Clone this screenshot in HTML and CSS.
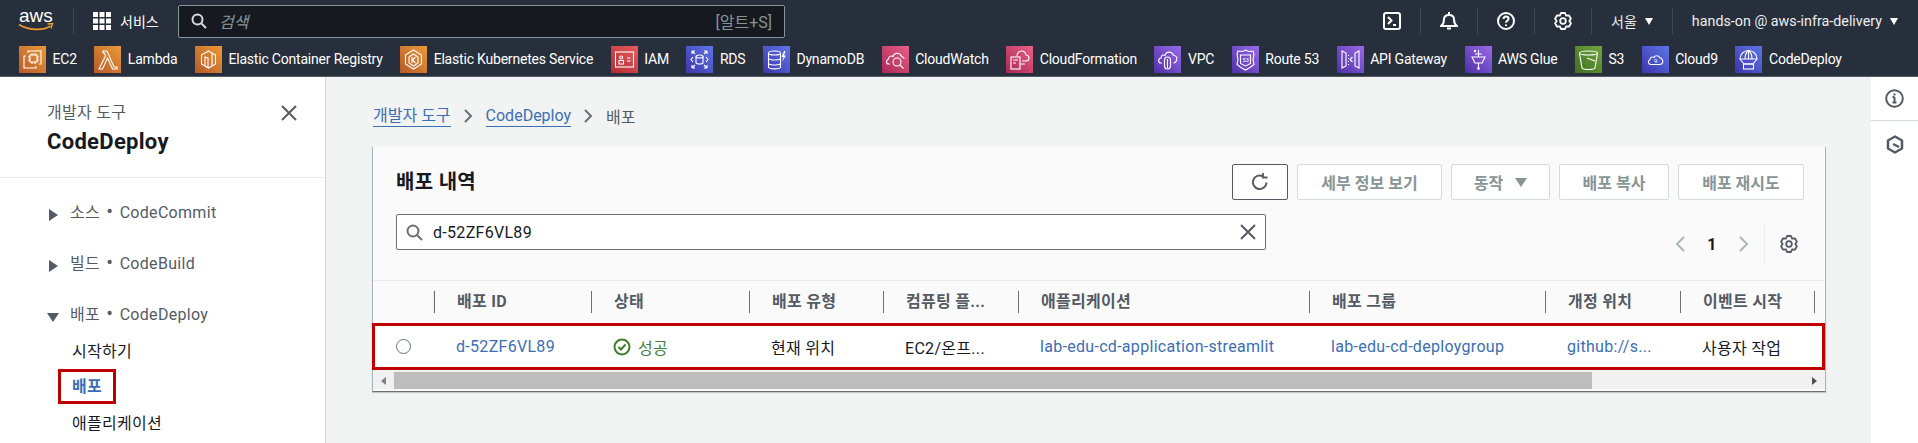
FILE: index.html
```html
<!DOCTYPE html>
<html lang="ko">
<head>
    <meta charset="UTF-8">
    <meta name="viewport" content="width=device-width, initial-scale=1.0">
    <title>배포 내역 - CodeDeploy</title>
    <link rel="stylesheet" href="styles.css">
</head>
<body>
    <svg class="defs" width="0" height="0">
        <defs>
            <linearGradient id="g-orange" x1="0" y1="1" x2="1" y2="0"><stop offset="0" stop-color="#b8592a"/><stop offset="1" stop-color="#eb9a37"/></linearGradient>
            <linearGradient id="g-red" x1="0" y1="1" x2="1" y2="0"><stop offset="0" stop-color="#b32a33"/><stop offset="1" stop-color="#e85c5f"/></linearGradient>
            <linearGradient id="g-blue" x1="0" y1="1" x2="1" y2="0"><stop offset="0" stop-color="#3d35ad"/><stop offset="1" stop-color="#5e75e6"/></linearGradient>
            <linearGradient id="g-pink" x1="0" y1="1" x2="1" y2="0"><stop offset="0" stop-color="#a82957"/><stop offset="1" stop-color="#ea5f85"/></linearGradient>
            <linearGradient id="g-purple" x1="0" y1="1" x2="1" y2="0"><stop offset="0" stop-color="#4f2fa8"/><stop offset="1" stop-color="#9a6ae8"/></linearGradient>
            <linearGradient id="g-green" x1="0" y1="1" x2="1" y2="0"><stop offset="0" stop-color="#3f6e22"/><stop offset="1" stop-color="#70a63c"/></linearGradient>
        </defs>
    </svg>

    <header class="top-nav">
        <div class="nav-row">
            <svg class="aws-logo" width="35" height="22" viewBox="0 0 35 22">
                <text x="0" y="12" class="aws-word">aws</text>
                <path d="M0 14.500c9 6 24 6.500 31.500 1.500" fill="none" stroke="#ec9a2d" stroke-width="1.600"/>
                <path d="M28.500 14l5-.5-1.500 5" fill="none" stroke="#ec9a2d" stroke-width="1.400"/>
            </svg>
            <span class="nav-sep sep-logo"></span>
            <svg class="grid-icon" width="18" height="18" viewBox="0 0 18 18" fill="#fff">
                <rect width="5" height="5"/><rect x="6.500" width="5" height="5"/><rect x="13" width="5" height="5"/>
                <rect y="6.500" width="5" height="5"/><rect x="6.500" y="6.500" width="5" height="5"/><rect x="13" y="6.500" width="5" height="5"/>
                <rect y="13" width="5" height="5"/><rect x="6.500" y="13" width="5" height="5"/><rect x="13" y="13" width="5" height="5"/>
            </svg>
            <span class="services">서비스</span>
            <div class="global-search">
                <svg width="16" height="16" viewBox="0 0 16 16" fill="none" stroke="#d5dbdb" stroke-width="2"><circle cx="6.500" cy="6.500" r="5"/><path d="M10.500 10.500L15 15"/></svg>
                <span class="search-hint">검색</span>
                <span class="search-key">[알트+S]</span>
            </div>
            <div class="nav-right">
                <svg class="nav-icon" width="18" height="18" viewBox="0 0 18 18" fill="none" stroke="#fff" stroke-width="2"><rect x="1" y="1" width="16" height="16" rx="2"/><path d="M5 5l3.500 3.500L5 12M10 13h3"/></svg>
                <span class="nav-sep"></span>
                <svg class="nav-icon" width="18" height="18" viewBox="0 0 18 18" fill="none" stroke="#fff" stroke-width="2"><path d="M1 14c2-1.500 3-3 3-6.500C4 4.500 6 3 9 3s5 1.500 5 4.500c0 3.500 1 5 3 6.500z"/><path d="M9 0v3M7 16.500h4"/></svg>
                <span class="nav-sep"></span>
                <svg class="nav-icon" width="18" height="18" viewBox="0 0 18 18" fill="none" stroke="#fff" stroke-width="2"><circle cx="9" cy="9" r="8"/><path d="M6.500 7c0-1.500 1-2.500 2.500-2.500s2.500 1 2.500 2.300c0 2-2.500 2-2.500 4"/><path d="M9 12.500v1.500"/></svg>
                <span class="nav-sep"></span>
                <svg class="nav-icon" width="18" height="18" viewBox="0 0 18 18" fill="none" stroke="#fff" stroke-width="1.800" stroke-linejoin="round"><circle cx="9" cy="9" r="2.800"/><path d="M7 1h4l1.150 2.540 2.750-.24 2 3.440-1.600 2.260 1.600 2.260-2 3.440-2.750-.24L11 17H7l-1.150-2.540-2.750.24-2-3.440L2.700 9 1.100 6.740l2-3.440 2.750.24z"/></svg>
                <span class="nav-sep"></span>
                <span class="nav-menu region">서울<i class="caret"></i></span>
                <span class="nav-sep"></span>
                <span class="nav-menu account">hands-on @ aws-infra-delivery<i class="caret"></i></span>
            </div>
        </div>
        <nav class="fav-row">
            <a class="fav"><svg class="fav-icon" viewBox="0 0 27 27"><rect width="27" height="27" fill="url(#g-orange)"/><g fill="none" stroke="#fff" stroke-width="1.100"><rect x="11" y="9" width="7" height="7"/><path d="M13 7v2M16 7v2M13 16v2M16 16v2M9 11h2M9 14h2M18 11h2M18 14h2"/><path d="M9 7V5h13v13h-2M7 10H5v12h12v-2"/></g></svg>EC2</a>
            <a class="fav"><svg class="fav-icon" viewBox="0 0 27 27"><rect width="27" height="27" fill="url(#g-orange)"/><path d="M9 5h4l7 16h3v2h-4.500L13.500 12 8.500 23H5l6.500-13-1-3H9z" fill="none" stroke="#fff" stroke-width="1.100"/></svg>Lambda</a>
            <a class="fav"><svg class="fav-icon" viewBox="0 0 27 27"><rect width="27" height="27" fill="url(#g-orange)"/><g fill="none" stroke="#fff" stroke-width="1.100"><path d="M13.500 5l7 4v9l-7 4-7-4V9z"/><path d="M17 7v13M10 11v9l3 1.500V12z"/></g></svg>Elastic Container Registry</a>
            <a class="fav"><svg class="fav-icon" viewBox="0 0 27 27"><rect width="27" height="27" fill="url(#g-orange)"/><g fill="none" stroke="#fff" stroke-width="1.100"><path d="M13.500 4l8 5v9l-8 5-8-5V9z"/><path d="M13.500 8l4.500 3v6l-4.500 3L9 17v-6z"/><path d="M12 11v6M15.500 11L12.500 14l3 3"/></g></svg>Elastic Kubernetes Service</a>
            <a class="fav"><svg class="fav-icon" viewBox="0 0 27 27"><rect width="27" height="27" fill="url(#g-red)"/><g fill="none" stroke="#fff" stroke-width="1.100"><rect x="4.500" y="6" width="18" height="15"/><path d="M8 18v-3.500h4.500V18zM16 12h3.500M16 15h3.500"/><circle cx="10.200" cy="11.500" r="1.500"/></g></svg>IAM</a>
            <a class="fav"><svg class="fav-icon" viewBox="0 0 27 27"><rect width="27" height="27" fill="url(#g-blue)"/><g fill="none" stroke="#fff" stroke-width="1.100"><ellipse cx="13.500" cy="10.500" rx="3.500" ry="1.500"/><path d="M10 10.500v6c0 2 7 2 7 0v-6"/><path d="M6 5h3M6 5v3M6 5l3 3M21 5h-3M21 5v3M21 5l-3 3M6 22h3M6 22v-3M6 22l3-3M21 22h-3M21 22v-3M21 22l-3-3M7 11l-2 2.500L7 16M20 11l2 2.500L20 16"/></g></svg>RDS</a>
            <a class="fav"><svg class="fav-icon" viewBox="0 0 27 27"><rect width="27" height="27" fill="url(#g-blue)"/><g fill="none" stroke="#fff" stroke-width="1.100"><ellipse cx="11.500" cy="7" rx="6" ry="2"/><path d="M5.500 7v14c0 2.500 12 2.500 12 0V7M5.500 12c0 2.500 9 2.500 12 1M5.500 17c0 2.500 9 2.500 12 1"/></g><path d="M21 5l-2.500 6h2l-1.500 5 4-6.500h-2l1.500-4.500z" fill="#fff"/></svg>DynamoDB</a>
            <a class="fav"><svg class="fav-icon" viewBox="0 0 27 27"><rect width="27" height="27" fill="url(#g-pink)"/><g fill="none" stroke="#fff" stroke-width="1.100"><path d="M8 18H6.500C4 18 4 13.500 6.500 13c0-3 3-3.500 4.500-2.500C12 6.500 18 6 19.500 10.500c1.500.3 2.500 1 2.500 2.500"/><circle cx="15" cy="16" r="4"/><path d="M18 19l3.500 3.500"/></g></svg>CloudWatch</a>
            <a class="fav"><svg class="fav-icon" viewBox="0 0 27 27"><rect width="27" height="27" fill="url(#g-pink)"/><g fill="none" stroke="#fff" stroke-width="1.100"><path d="M11 10c0-3 2-5 4.500-5s4 1.500 4.500 4c2 0 3 1.500 3 3s-1 3-3 3h-4"/><rect x="5" y="11" width="9" height="12"/><path d="M7 14h5M7 17h3M14 18h5"/></g></svg>CloudFormation</a>
            <a class="fav"><svg class="fav-icon" viewBox="0 0 27 27"><rect width="27" height="27" fill="url(#g-purple)"/><g fill="none" stroke="#fff" stroke-width="1.100"><path d="M8 17H7c-3 0-3-4.500 0-5 0-3 2.500-3.500 4-2.500C12 5 18 5 19.500 9.500c3 0 4 2.500 3 5-.5 1.500-1.500 2.500-3 2.500"/><path d="M10.500 14c0-4 6-4 6 0v6c0 4-6 4-6 0z"/><path d="M13.500 13v9"/></g></svg>VPC</a>
            <a class="fav"><svg class="fav-icon" viewBox="0 0 27 27"><rect width="27" height="27" fill="url(#g-purple)"/><g fill="none" stroke="#fff" stroke-width="1.100"><path d="M13.500 4l3 1.500 4.500-.5 1 3-1 5.500 1 5-4 3-4.500 2.500L9 21.500l-4-3 1-5-1-5.500 1-3 4.500.5z"/><path d="M8.500 9h10v8.500l-5 2.500-5-2.500z"/></g><text x="13.500" y="16" class="icon-num">53</text></svg>Route 53</a>
            <a class="fav"><svg class="fav-icon" viewBox="0 0 27 27"><rect width="27" height="27" fill="url(#g-purple)"/><g fill="none" stroke="#fff" stroke-width="1.100"><path d="M5 5l4 2v13l-4 2zM22 5l-4 2v13l4 2z"/><path d="M11.500 9v1M11.500 12v1M11.500 15v1M11.500 18v1M15.500 11l-2.500 2.500 2.500 2.500"/></g></svg>API Gateway</a>
            <a class="fav"><svg class="fav-icon" viewBox="0 0 27 27"><rect width="27" height="27" fill="url(#g-purple)"/><g fill="none" stroke="#fff" stroke-width="1.100"><path d="M7 11h13l-3 6h-7z"/><path d="M13.500 17v5M13.500 4v7M10 8h7"/></g><circle cx="13.500" cy="22.500" r="1.300" fill="#fff"/><circle cx="10" cy="5" r="1.200" fill="#fff"/></svg>AWS Glue</a>
            <a class="fav"><svg class="fav-icon" viewBox="0 0 27 27"><rect width="27" height="27" fill="url(#g-green)"/><g fill="none" stroke="#fff" stroke-width="1.100"><ellipse cx="13.500" cy="7" rx="9" ry="2"/><path d="M4.500 7l2.500 15c1 2 12 2 13 0L22.500 7"/><path d="M12 12l8 3"/></g></svg>S3</a>
            <a class="fav"><svg class="fav-icon" viewBox="0 0 27 27"><rect width="27" height="27" fill="url(#g-blue)"/><path d="M9 18.500c-3 0-3.500-4-1-4.800C8 11 10.500 10.500 12 11.500c1-2.500 5-2.500 6 .5 3-.500 4.500 6.500-.5 6.500z" fill="none" stroke="#fff" stroke-width="1.100"/><text x="13.500" y="17" class="icon-num">9</text></svg>Cloud9</a>
            <a class="fav"><svg class="fav-icon" viewBox="0 0 27 27"><rect width="27" height="27" fill="url(#g-blue)"/><g fill="none" stroke="#fff" stroke-width="1.100"><path d="M5 13a8.500 8.500 0 0 1 17 0z"/><path d="M10 13c0-4 1.500-7 3.500-8.500C15.500 6 17 9 17 13M13.500 4.500V13M5 13l4 5h9l4-5"/><rect x="8.500" y="18" width="10" height="5"/></g></svg>CodeDeploy</a>
        </nav>
    </header>

    <div class="page">
        <aside class="sidebar">
            <div class="side-head">
                <div>
                    <div class="side-sup">개발자 도구</div>
                    <div class="side-title">CodeDeploy</div>
                </div>
                <svg class="side-close" width="16" height="16" viewBox="0 0 16 16" fill="none" stroke="#545b64" stroke-width="2"><path d="M1 1l14 14M15 1L1 15"/></svg>
            </div>
            <div class="side-nav">
                <div class="side-group"><i class="tri-right"></i><span>소스 <span class="dot">•</span> CodeCommit</span></div>
                <div class="side-group"><i class="tri-right"></i><span>빌드 <span class="dot">•</span> CodeBuild</span></div>
                <div class="side-group"><i class="tri-down"></i><span>배포 <span class="dot">•</span> CodeDeploy</span></div>
                <a class="side-link">시작하기</a>
                <a class="side-link current">배포</a>
                <a class="side-link">애플리케이션</a>
            </div>
        </aside>

        <main class="content">
            <div class="crumbs">
                <a class="crumb">개발자 도구</a>
                <svg width="9" height="14" viewBox="0 0 9 14" fill="none" stroke="#687078" stroke-width="2"><path d="M1 1l6 6-6 6"/></svg>
                <a class="crumb">CodeDeploy</a>
                <svg width="9" height="14" viewBox="0 0 9 14" fill="none" stroke="#687078" stroke-width="2"><path d="M1 1l6 6-6 6"/></svg>
                <span class="crumb-here">배포</span>
            </div>

            <section class="card">
                <div class="card-top">
                    <div class="card-title-row">
                        <h2>배포 내역</h2>
                        <div class="actions">
                            <button class="btn refresh"><svg width="18" height="18" viewBox="0 0 18 18" fill="none" stroke="#545b64" stroke-width="2"><path d="M15.500 9.500A6.800 6.800 0 1 1 12 3.300"/><path d="M12 0v4.500h4.500" stroke-width="1.800"/></svg></button>
                            <button class="btn off details">세부 정보 보기</button>
                            <button class="btn off action">동작<i class="caret caret-grey"></i></button>
                            <button class="btn off copy">배포 복사</button>
                            <button class="btn off retry">배포 재시도</button>
                        </div>
                    </div>
                    <div class="filter-row">
                        <div class="filter">
                            <svg width="17" height="17" viewBox="0 0 17 17" fill="none" stroke="#687078" stroke-width="2"><circle cx="7" cy="7" r="5.500"/><path d="M11 11l5 5"/></svg>
                            <span class="filter-text">d-52ZF6VL89</span>
                            <svg width="16" height="16" viewBox="0 0 16 16" fill="none" stroke="#545b64" stroke-width="2"><path d="M1 1l14 14M15 1L1 15"/></svg>
                        </div>
                        <div class="pager">
                            <svg width="10" height="16" viewBox="0 0 10 16" fill="none" stroke="#aab7b8" stroke-width="2"><path d="M9 1L2 8l7 7"/></svg>
                            <b>1</b>
                            <svg width="10" height="16" viewBox="0 0 10 16" fill="none" stroke="#aab7b8" stroke-width="2"><path d="M1 1l7 7-7 7"/></svg>
                            <span class="pager-sep"></span>
                            <svg width="18" height="18" viewBox="0 0 18 18" fill="none" stroke="#545b64" stroke-width="1.800" stroke-linejoin="round"><circle cx="9" cy="9" r="2.800"/><path d="M7 1h4l1.150 2.540 2.750-.24 2 3.440-1.600 2.260 1.600 2.260-2 3.440-2.750-.24L11 17H7l-1.150-2.540-2.750.24-2-3.440L2.700 9 1.100 6.740l2-3.440 2.750.24z"/></svg>
                        </div>
                    </div>
                </div>

                <div class="thead">
                    <div class="th col-sel"></div>
                    <div class="th col-id">배포 ID</div>
                    <div class="th col-status">상태</div>
                    <div class="th col-type">배포 유형</div>
                    <div class="th col-compute">컴퓨팅 플...</div>
                    <div class="th col-app">애플리케이션</div>
                    <div class="th col-group">배포 그룹</div>
                    <div class="th col-rev">개정 위치</div>
                    <div class="th col-event">이벤트 시작</div>
                </div>
                <div class="trow">
                    <div class="td col-sel"><i class="radio"></i></div>
                    <div class="td col-id"><a>d-52ZF6VL89</a></div>
                    <div class="td col-status ok">
                        <svg width="18" height="18" viewBox="0 0 18 18" fill="none" stroke="#3b7f2b" stroke-width="2"><circle cx="9" cy="9" r="7.500"/><path d="M5.500 9l2.500 2.500 4.500-5"/></svg>성공
                    </div>
                    <div class="td col-type">현재 위치</div>
                    <div class="td col-compute">EC2/온프...</div>
                    <div class="td col-app"><a>lab-edu-cd-application-streamlit</a></div>
                    <div class="td col-group"><a>lab-edu-cd-deploygroup</a></div>
                    <div class="td col-rev"><a>github://s...</a></div>
                    <div class="td col-event">사용자 작업</div>
                </div>
                <div class="hscroll">
                    <i class="arrow-left"></i>
                    <div class="thumb"></div>
                    <i class="arrow-right"></i>
                </div>
            </section>
        </main>

        <aside class="rail">
            <div class="rail-item">
                <svg width="19" height="19" viewBox="0 0 19 19" fill="none" stroke="#545b64" stroke-width="2"><circle cx="9.500" cy="9.500" r="8.300"/><path d="M9.500 8v5M7.500 13.500h4M7.500 8h2M9.500 4.500v2"/></svg>
            </div>
            <div class="rail-item second">
                <svg width="18" height="19" viewBox="0 0 18 19" fill="none" stroke="#545b64" stroke-width="2.500"><path d="M9 1.500l7 4v8l-7 4-7-4v-8z" stroke-linejoin="round"/><path d="M7 9l6 3" /></svg>
            </div>
        </aside>
    </div>
</body>
</html>
```

FILE: styles.css
```css
* {
    box-sizing: border-box;
}
html, body {
    margin: 0;
    height: 100%;
    overflow: hidden;
}
body {
    font-family: Roboto, 'Noto Sans CJK KR', sans-serif;
    font-size: 16px;
    letter-spacing: 0.3px;
    color: #16191f;
    background-color: #f2f3f3;
}
.defs {
    position: absolute;
}
i {
    display: inline-block;
}

/* top nav */
.top-nav {
    height: 77px;
    background-color: #282f3c;
    border-bottom: 1px solid #545b64;
    color: #fff;
    letter-spacing: 0;
}
.nav-row {
    height: 42px;
    display: flex;
    align-items: center;
    padding-left: 19px;
}
.nav-sep {
    width: 1px;
    height: 26px;
    background-color: #414750;
}
.sep-logo {
    margin: 0 19px;
}
.aws-logo {
    overflow: visible;
}
.aws-word {
    font-family: 'Liberation Sans', sans-serif;
    font-size: 19px;
    fill: #fff;
}
.icon-num {
    font-size: 6px;
    fill: #fff;
    text-anchor: middle;
}
.services {
    margin-left: 9px;
    font-size: 14px;
    width: 38px;
    white-space: nowrap;
}
.global-search {
    margin-left: 20px;
    width: 607px;
    height: 33px;
    display: flex;
    align-items: center;
    padding: 0 12px;
    background-color: #16191f;
    border: 1px solid #879596;
    border-radius: 2px;
}
.search-hint {
    margin-left: 12px;
    font-style: italic;
    color: #879596;
}
.search-key {
    margin-left: auto;
    color: #879596;
}
.nav-right {
    margin-left: auto;
    display: flex;
    align-items: center;
    padding-right: 20px;
    gap: 19px;
}
.nav-menu {
    display: flex;
    align-items: center;
    gap: 8px;
    font-size: 14px;
    color: #eaeded;
}
.account {
    font-size: 14.300px;
}
.caret {
    width: 0;
    height: 0;
    border-left: 4.500px solid transparent;
    border-right: 4.500px solid transparent;
    border-top: 7px solid #fff;
}
.fav-row {
    display: flex;
    align-items: center;
    gap: 17.500px;
    padding-left: 19px;
    height: 34px;
}
.fav {
    display: flex;
    align-items: center;
    gap: 6.500px;
    color: #fff;
    font-size: 14px;
    letter-spacing: -0.2px;
    white-space: nowrap;
}
.fav-icon {
    width: 27px;
    height: 27px;
}

/* layout */
.page {
    display: flex;
    height: 366px;
}
.sidebar {
    width: 326px;
    background-color: #fff;
    border-right: 1px solid #d5dbdb;
    flex-shrink: 0;
}
.side-head {
    height: 101px;
    padding: 22px 28px 0 47px;
    display: flex;
    justify-content: space-between;
    align-items: flex-start;
    border-bottom: 1px solid #eaeded;
}
.side-sup {
    color: #545b64;
}
.side-title {
    margin-top: 6px;
    font-size: 22px;
    font-weight: 700;
}
.side-close {
    margin-top: 6px;
}
.side-nav {
    padding: 21px 0 0 49px;
}
.side-group {
    display: flex;
    align-items: center;
    gap: 12px;
    height: 24px;
    margin-bottom: 27px;
    color: #545b64;
}
.dot {
    font-size: 20px;
    line-height: 0;
    margin: 0 2px;
}
.tri-right {
    width: 0;
    height: 0;
    margin-top: 8px;
    border-top: 6px solid transparent;
    border-bottom: 6px solid transparent;
    border-left: 9px solid #545b64;
}
.tri-down {
    width: 0;
    height: 0;
    margin: 8px -1px 0 -2px;
    border-left: 6px solid transparent;
    border-right: 6px solid transparent;
    border-top: 9px solid #545b64;
}
.side-link {
    display: block;
    width: max-content;
    margin-left: 23px;
    height: 35px;
    line-height: 35px;
    color: #16191f;
}
.side-group:last-of-type {
    margin-bottom: 9px;
}
.side-link.current {
    color: #3c6eb4;
    font-weight: 700;
    margin-left: 9px;
    margin-bottom: 2px;
    padding: 0 11px 0 11px;
    border: 3px solid #c00000;
    line-height: 29px;
}

/* main */
.content {
    flex: 1;
    padding: 25px 45px 0 46px;
    min-width: 0;
}
.crumbs {
    display: flex;
    align-items: center;
    gap: 13px;
    height: 28px;
    margin-bottom: 17px;
    padding-left: 1px;
    letter-spacing: 0;
}
.crumb {
    color: #3c6eb4;
    border-bottom: 1px solid #3c6eb4;
    line-height: 20px;
}
.crumb-here {
    color: #545b64;
}
.card {
    height: 245px;
    background-color: #fafafa;
    border-left: 1px solid #aab7b8;
    border-right: 1px solid #aab7b8;
    border-bottom: 1px solid #687078;
    box-shadow: 0 1px 1px rgba(0, 26, 51, 0.2);
}
.card-top {
    height: 133px;
    padding: 17px 21px 0 23px;
}
.card-title-row {
    display: flex;
    justify-content: space-between;
    align-items: center;
}
h2 {
    margin: 0 0 4px;
    font-size: 20px;
    font-weight: 700;
}
.actions {
    display: flex;
    gap: 9px;
}
.btn {
    height: 36px;
    background-color: #fff;
    border: 1px solid #545b64;
    border-radius: 2px;
    font: 700 16px Roboto, 'Noto Sans CJK KR', sans-serif;
    display: flex;
    align-items: center;
    justify-content: center;
    padding: 0;
}
.btn.off {
    color: #879596;
    border-color: #d5dbdb;
}
.refresh { width: 56px; }
.details { width: 145px; }
.action { width: 99px; gap: 12px; }
.copy { width: 110px; }
.retry { width: 126px; }
.caret-grey {
    border-left-width: 6px;
    border-right-width: 6px;
    border-top: 9px solid #879596;
}
.filter-row {
    display: flex;
    justify-content: space-between;
    align-items: flex-start;
    margin-top: 14px;
}
.filter {
    width: 870px;
    height: 36px;
    background-color: #fff;
    border: 1px solid #687078;
    border-radius: 2px;
    display: flex;
    align-items: center;
    padding: 0 9px;
    gap: 10px;
}
.filter-text {
    flex: 1;
}
.pager {
    display: flex;
    align-items: center;
    margin-top: 12px;
    padding-right: 6px;
}
.pager b {
    width: 54px;
    text-align: center;
}
.pager-sep {
    width: 1px;
    height: 36px;
    margin: 0 15px;
    background-color: #eaeded;
}

/* table */
.thead, .trow {
    display: flex;
}
.thead {
    height: 43px;
    border-top: 1px solid #eaeded;
    align-items: center;
}
.th {
    height: 22px;
    line-height: 22px;
    padding-left: 22px;
    border-left: 1px solid #687078;
    font-weight: 700;
    color: #545b64;
    white-space: nowrap;
}
.th.col-sel {
    border-left: none;
    padding: 0;
    border-right: 1px solid #eaeded;
}
.col-sel { width: 61px; }
.col-id { width: 157px; }
.col-status { width: 158px; }
.col-type { width: 134px; }
.col-compute { width: 135px; }
.col-app { width: 291px; }
.col-group { width: 236px; }
.col-rev { width: 135px; }
.col-event { width: 135px; }
.th.col-event {
    border-right: 1px solid #687078;
}
.trow {
    height: 47px;
    align-items: center;
    background-color: #fff;
    border: 3px solid #c00000;
    margin: 0 0 0 -1px;
    width: calc(100% + 1px);
}
.td {
    padding-left: 23px;
    white-space: nowrap;
    display: flex;
    align-items: center;
    gap: 7px;
}
.td a {
    color: #3c6eb4;
}
.td.col-sel {
    width: 58px;
    padding-left: 21px;
}
.ok {
    color: #44803a;
}
.radio {
    width: 15px;
    height: 15px;
    border: 1px solid #687078;
    border-radius: 50%;
}
.hscroll {
    height: 19px;
    display: flex;
    align-items: center;
    background-color: #f1f1f1;
    padding: 2px 0 0;
}
.arrow-left {
    width: 0;
    height: 0;
    margin: 0 8px;
    border-top: 4px solid transparent;
    border-bottom: 4px solid transparent;
    border-right: 5px solid #7f7f7f;
}
.thumb {
    width: 1198px;
    height: 17px;
    background-color: #bdbdbd;
}
.arrow-right {
    width: 0;
    height: 0;
    margin-left: auto;
    margin-right: 8px;
    border-top: 4px solid transparent;
    border-bottom: 4px solid transparent;
    border-left: 5px solid #505050;
}

/* right rail */
.rail {
    width: 47px;
    background-color: #fff;
    flex-shrink: 0;
}
.rail-item {
    height: 44px;
    display: flex;
    align-items: center;
    justify-content: center;
    border-bottom: 1px solid #d5dbdb;
}
.rail-item.second {
    border-bottom: none;
    height: 46px;
}
```
